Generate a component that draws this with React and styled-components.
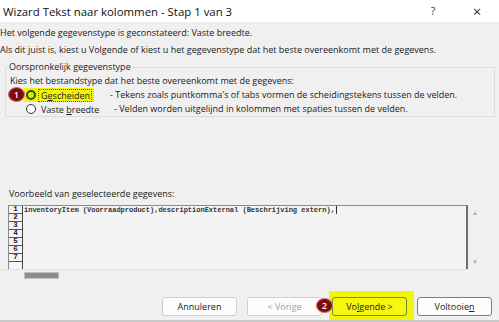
import React from "react"
import styled, { createGlobalStyle } from "styled-components"

const Global = createGlobalStyle`
  html, body {
    margin: 0;
    padding: 0;
    background: #f0f0f0;
  }
  body {
    font-family: "Segoe UI", "Open Sans", "Noto Sans", sans-serif;
    color: #1a1a1a;
  }
`

const Window = styled.div`
  width: 499px;
  height: 322px;
  background: #f0f0f0;
  display: flex;
  flex-direction: column;
  overflow: hidden;
  box-sizing: border-box;
  border-bottom: 2px solid #c9c9c9;
`

const TitleBar = styled.div`
  height: 22px;
  flex: 0 0 22px;
  background: #ffffff;
  display: flex;
  align-items: center;
  padding-left: 3px;
  font-size: 11.4px;
  color: #111;
`

const TitleText = styled.span`
  flex: 1;
`

const TitleControl = styled.span`
  width: 44px;
  text-align: center;
  font-size: ${p => (p.$big ? "15px" : "10.5px")};
  color: #333;
`

const Body = styled.div`
  display: flex;
  flex-direction: column;
  font-size: 9px;
`

const Line = styled.div`
  line-height: 16px;
  height: 16px;
  margin-top: ${p => p.$top || 0}px;
  padding-left: ${p => p.$left || 0}px;
  white-space: nowrap;
`

const Group = styled.fieldset`
  margin: 2px 4px 0 5px;
  padding: 0 0 0 4px;
  border: 1px solid #dcdcdc;
  border-radius: 1px;
  min-width: 0;
`

const Legend = styled.legend`
  padding: 0 1px;
  margin-left: -2px;
  line-height: 14px;
`

const Row = styled.div`
  display: flex;
  align-items: center;
  height: 14px;
  line-height: 14px;
  white-space: nowrap;
  position: relative;
`

const Radio = styled.span`
  width: 10px;
  height: 10px;
  box-sizing: border-box;
  border-radius: 50%;
  margin-left: ${p => p.$left}px;
  border: ${p => (p.$on ? "2.5px solid #1f5a0c" : "1px solid #333")};
  background: ${p => (p.$on ? "#e6e600" : "#fff")};
  flex: 0 0 auto;
`

const Highlight = styled.span`
  background: #f2f20c;
  display: flex;
  align-items: center;
  height: 14px;
  padding: 0 2px;
  margin-left: 14px;
`

const OptionLabel = styled.span`
  margin-left: ${p => p.$left}px;
  width: ${p => p.$w}px;
  flex: 0 0 auto;
  padding: 0 2px;
  box-sizing: border-box;
  height: 13px;
  line-height: 12px;
  border: 1px dotted ${p => (p.$focus ? "#555" : "transparent")};
`

const Description = styled.span`
  margin-left: ${p => p.$left}px;
`

const U = styled.span`
  text-decoration: underline;
  text-underline-offset: 1px;
`

const Badge = styled.span`
  position: absolute;
  left: ${p => p.$left}px;
  top: ${p => p.$top}px;
  width: 17px;
  height: 15px;
  border-radius: 50%;
  background: #7d0d0d;
  border: 1px solid #c77;
  box-sizing: border-box;
  color: #fff;
  font-size: 8.5px;
  font-weight: 600;
  display: flex;
  align-items: center;
  justify-content: center;
  z-index: 2;
`

const PreviewArea = styled.div`
  display: flex;
  margin: 4px 0 0 8px;
  height: 64px;
`

const PreviewBox = styled.div`
  width: 460px;
  height: 64px;
  box-sizing: border-box;
  border-top: 1px solid #8a8a8a;
  border-left: 1px solid #8a8a8a;
  border-right: 2px solid #6e6e6e;
  background: #f4f4f4;
  display: flex;
  overflow: hidden;
`

const Gutter = styled.div`
  width: 13px;
  flex: 0 0 13px;
  border-right: 1px solid #444;
  display: flex;
  flex-direction: column;
`

const GutterCell = styled.div`
  height: 8px;
  box-sizing: border-box;
  border-bottom: 1px solid #555;
  font-family: "Liberation Mono", monospace;
  font-size: 7.5px;
  line-height: 7px;
  text-align: center;
  color: #222;
  font-weight: bold;
`

const Code = styled.div`
  font-family: "Liberation Mono", "Courier New", monospace;
  font-size: 7px;
  line-height: 9px;
  font-weight: bold;
  color: #333;
  white-space: nowrap;
  padding-left: 1px;
`

const Caret = styled.span`
  display: inline-block;
  width: 1px;
  height: 8px;
  background: #333;
  vertical-align: middle;
  margin-left: 1px;
`

const VScroll = styled.div`
  width: 14px;
  display: flex;
  flex-direction: column;
  justify-content: space-between;
  align-items: center;
  padding: 4px 0 3px;
  box-sizing: border-box;
  color: #a8a8a8;
  font-size: 6px;
`

const HScroll = styled.div`
  height: 11px;
  display: flex;
  align-items: center;
  border-top: 1px solid #e2e2e2;
  margin: 0 30px 0 0;
  padding-left: 24px;
`

const Thumb = styled.div`
  width: 35px;
  height: 7px;
  background: #8c8c8c;
  border: 1px solid #c0c0c0;
  box-sizing: border-box;
`

const Footer = styled.div`
  display: flex;
  justify-content: flex-end;
  align-items: flex-start;
  gap: 10px;
  padding: 16px 7px 0 0;
`

const Button = styled.button`
  width: 75px;
  height: 19px;
  box-sizing: border-box;
  font-family: inherit;
  font-size: 9px;
  background: #fdfdfd;
  border: 1px solid ${p => (p.$primary ? "#3d8fd6" : "#cfcfcf")};
  border-radius: 3px;
  color: ${p => (p.$disabled ? "#a3a3a3" : "#1a1a1a")};
  padding: 0;
  position: relative;
`

const YellowZone = styled.div`
  background: #f4f40a;
  padding: 6px 7px 12px 3px;
  margin: -6px -7px 0 -3px;
  position: relative;
  display: flex;
  align-items: flex-start;
`

const NextButton = styled(Button)`
  border-color: #6f8f28;
  background: #f6f610;
`

export default function App() {
  const rows = [1, 2, 3, 4, 5, 6, 7]
  return (
    <>
      <Global />
      <Window>
        <TitleBar>
          <TitleText>Wizard Tekst naar kolommen - Stap 1 van 3</TitleText>
          <TitleControl>?</TitleControl>
          <TitleControl $big>×</TitleControl>
        </TitleBar>
        <Body>
          <Line $top={3}>Het volgende gegevenstype is geconstateerd: Vaste breedte.</Line>
          <Line $top={1}>
            Als dit juist is, kiest u Volgende of kiest u het gegevenstype dat het beste overeenkomt met de gegevens.
          </Line>
          <Group>
            <Legend>Oorspronkelijk gegevenstype</Legend>
            <Row>Kies het bestandstype dat het beste overeenkomt met de gegevens:</Row>
            <Row>
              <Badge $left={-2} $top={-1}>1</Badge>
              <Highlight>
                <Radio $on $left={0} />
                <OptionLabel $focus $left={2} $w={54}>
                  G<U>e</U>scheiden
                </OptionLabel>
              </Highlight>
              <Description $left={16}>
                - Tekens zoals puntkomma's of tabs vormen de scheidingstekens tussen de velden.
              </Description>
            </Row>
            <Row>
              <Radio $left={16} />
              <OptionLabel $left={2} $w={58}>
                Vaste <U>b</U>reedte
              </OptionLabel>
              <Description $left={18}>
                - Velden worden uitgelijnd in kolommen met spaties tussen de velden.
              </Description>
            </Row>
          </Group>
          <Line $top={70} $left={9} style={{ height: 14, lineHeight: "14px" }}>
            Voorbeeld van geselecteerde gegevens:
          </Line>
          <PreviewArea>
            <PreviewBox>
              <Gutter>
                {rows.map(n => (
                  <GutterCell key={n}>{n}</GutterCell>
                ))}
              </Gutter>
              <Code>
                inventoryItem (Voorraadproduct),descriptionExternal (Beschrijving extern),
                <Caret />
              </Code>
            </PreviewBox>
            <VScroll>
              <span>▲</span>
              <span>▼</span>
            </VScroll>
          </PreviewArea>
          <HScroll>
            <Thumb />
          </HScroll>
          <Footer>
            <Button>Annuleren</Button>
            <Button $disabled>&lt; Vorige</Button>
            <YellowZone>
              <Badge $left={-13} $top={7}>2</Badge>
              <NextButton>
                Vo<U>l</U>gende &gt;
              </NextButton>
            </YellowZone>
            <Button $primary>
              Voltooie<U>n</U>
            </Button>
          </Footer>
        </Body>
      </Window>
    </>
  )
}
